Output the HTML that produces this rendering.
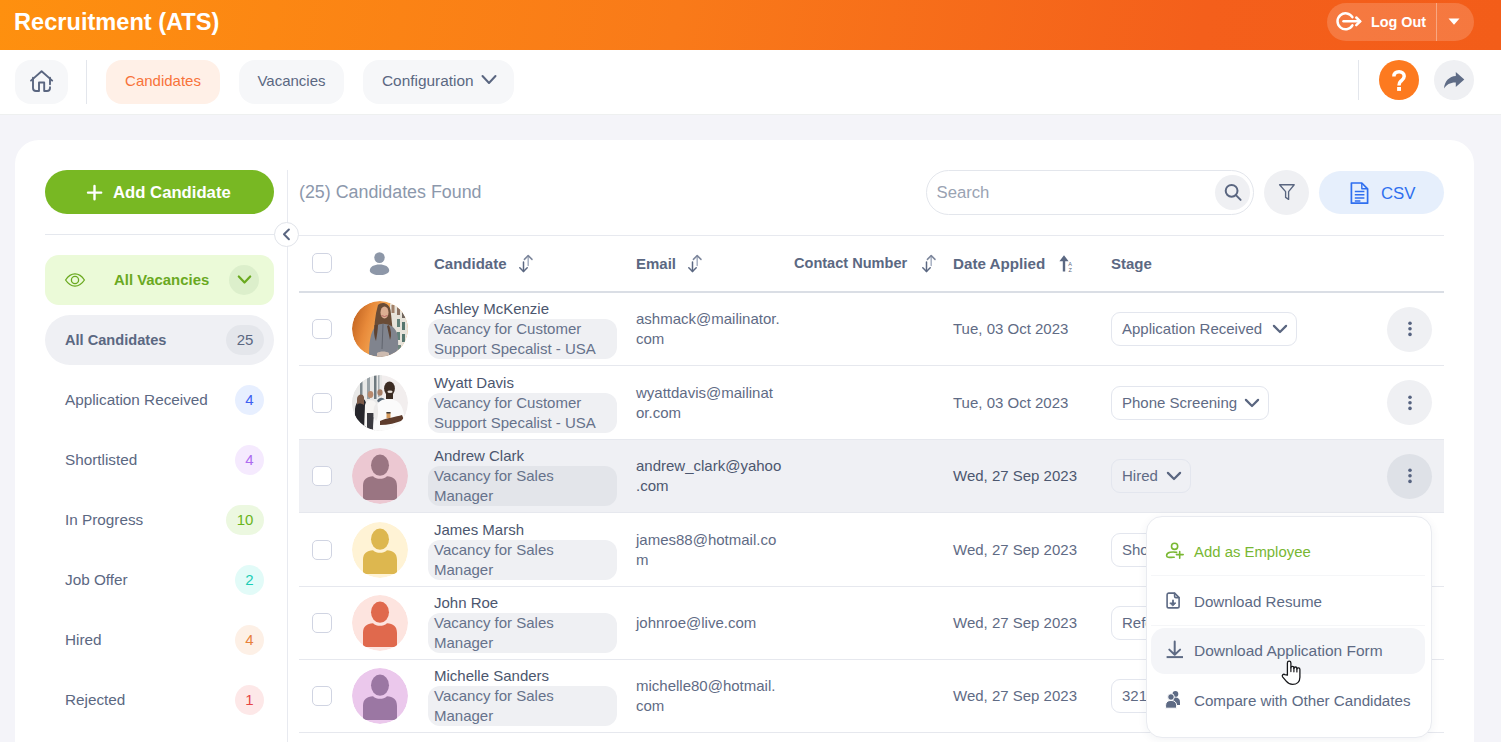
<!DOCTYPE html>
<html><head><meta charset="utf-8">
<style>
*{box-sizing:border-box;margin:0;padding:0}
html,body{width:1501px;height:742px;overflow:hidden}
body{position:relative;background:#f4f4f9;font-family:"Liberation Sans",sans-serif;color:#5b6882}
.a{position:absolute}
.hdr{left:0;top:0;width:1501px;height:50px;background:linear-gradient(100deg,#fe900f 0%,#f97a19 45%,#f45f1b 80%,#f35d19 100%)}
.nav{left:0;top:50px;width:1501px;height:64px;background:#fff;box-shadow:0 1px 0 #eef0f0}
.pill{position:absolute;top:60px;height:44px;border-radius:16px;background:#f6f7f9;font-size:15px;line-height:42px;color:#5b6882}
.card{left:15px;top:140px;width:1459px;height:700px;background:#fff;border-radius:24px}
.txt{position:absolute;white-space:nowrap}
.badge{position:absolute;right:1237px;height:30px;min-width:29px;border-radius:15px;font-size:15px;line-height:30px;text-align:center;padding:0 6px}
.side{position:absolute;left:65px;font-size:15.3px;line-height:20px;color:#5b6882;white-space:nowrap}
.hcell{position:absolute;top:236px;height:55px;line-height:55px;font-size:15px;font-weight:700;color:#5b6882;white-space:nowrap}
.sep{position:absolute;left:299px;width:1145px;height:1px;background:#e6e8ee}
.row{position:absolute;left:299px;width:1145px}
.cell{position:absolute;top:0;height:100%;display:flex;align-items:center}
.cb{width:20px;height:20px;border:1px solid #d0d4e2;border-radius:5px;background:#fff}
.av{width:56px;height:56px;border-radius:50%;overflow:hidden}
.nm{font-size:15px;line-height:20px;color:#4b566e;white-space:nowrap}
.vac{position:relative;margin-left:-6px;padding:0 6px;width:189px;border-radius:12px;background:#eff0f3;font-size:15px;line-height:20px;color:#66728b;white-space:nowrap}
.em{font-size:15px;line-height:20px;color:#5f6b85;white-space:nowrap}
.dt{font-size:15px;line-height:20px;color:#5f6b85;white-space:nowrap}
.stg{position:relative;height:34px;border:1px solid #e3e6ee;border-radius:9px;background:transparent;font-size:15px;line-height:32px;color:#5f6b85;padding:0 0 0 10px;white-space:nowrap;display:flex;align-items:center}
.kb{width:45px;height:45px;border-radius:50%;background:#eff0f3;display:flex;align-items:center;justify-content:center}
</style></head><body>

<!-- header -->
<div class="a hdr"></div>
<div class="txt" style="left:14px;top:7px;font-size:23.6px;line-height:30px;font-weight:700;color:#fff">Recruitment (ATS)</div>
<div class="a" style="left:1327px;top:3px;width:147px;height:38px;border-radius:19px;background:rgba(255,255,255,0.17)"></div>
<div class="a" style="left:1436px;top:3px;width:1px;height:38px;background:rgba(255,255,255,0.35)"></div>
<svg class="a" style="left:1330px;top:8px" width="36" height="28" viewBox="0 0 36 28" fill="none" stroke="#fff" stroke-width="2.5" stroke-linecap="round" stroke-linejoin="round">
<path d="M22.4 9.2 A8 8 0 1 0 22.4 17.4"/><path d="M13.5 13.3 H30"/><path d="M26.3 9.5 L30.2 13.3 L26.3 17.1"/></svg>
<div class="txt" style="left:1371px;top:12px;font-size:14.4px;line-height:20px;font-weight:700;color:#fff">Log Out</div>
<svg class="a" style="left:1447px;top:17px" width="14" height="9" viewBox="0 0 14 9"><path fill="#fff" d="M1.5 1.5 H12.5 L7 7.8 Z"/></svg>

<!-- nav -->
<div class="a nav"></div>
<div class="pill" style="left:15px;width:53px"></div>
<svg class="a" style="left:25px;top:65px" width="35" height="32" viewBox="0 0 35 32" fill="none" stroke="#5a6680" stroke-width="1.9" stroke-linecap="round" stroke-linejoin="round">
<path d="M6 15.6 L16.6 6.3 L27.2 15.6"/>
<path d="M8 12.8 V23 Q8 26 11 26 H14 V17.5 H19.2 V26 H22 Q25 26 25 23 V22.2"/>
<path d="M25 19.3 V12.8"/>
</svg>
<div class="a" style="left:86px;top:60px;width:1px;height:44px;background:#e3e6ec"></div>
<div class="pill" style="left:106px;width:114px;background:#fff0e7;color:#f8733a;text-align:center">Candidates</div>
<div class="pill" style="left:239px;width:105px;text-align:center">Vacancies</div>
<div class="pill" style="left:363px;width:151px;padding-left:19px;font-size:15.4px">Configuration</div>
<svg class="a" style="left:481px;top:74px" width="16" height="12" viewBox="0 0 16 12" fill="none" stroke="#5a6680" stroke-width="2" stroke-linecap="round" stroke-linejoin="round"><path d="M1.5 2 L8 9 L14.5 2"/></svg>
<div class="a" style="left:1358px;top:60px;width:1px;height:40px;background:#e3e6ec"></div>
<div class="a" style="left:1379px;top:60px;width:40px;height:40px;border-radius:50%;background:#fd7a1f"></div>
<svg class="a" style="left:1384px;top:65px" width="30" height="30" viewBox="0 0 30 30"><path d="M9.9 11.6 C9.9 8.2 12.3 6.8 15.1 6.8 C18.1 6.8 20.2 8.7 20.2 11.2 C20.2 13.7 18.5 14.8 16.8 16.2 C15.6 17.2 15 18.2 15 20.6" fill="none" stroke="#fff" stroke-width="3.5"/><rect x="13.1" y="22" width="3.9" height="3.9" fill="#fff"/></svg>
<div class="a" style="left:1434px;top:60px;width:40px;height:40px;border-radius:50%;background:#eff0f3"></div>
<svg class="a" style="left:1443px;top:70px" width="22" height="20" viewBox="0 0 22 20"><path fill="#5f6c86" d="M21.3 9.4 L12.8 1.9 V5.9 C6.4 6.3 1.6 10.8 1 18.5 C3.6 14.4 7.4 12.2 12.8 12.4 V16.9 Z"/></svg>

<!-- card -->
<div class="a card"></div>
<div class="a" style="left:45px;top:170px;width:229px;height:44px;border-radius:22px;background:#78b823"></div>
<svg class="a" style="left:86px;top:184px" width="17" height="17" viewBox="0 0 17 17" stroke="#fff" stroke-width="2.4" stroke-linecap="round"><path d="M8.5 2 V15.2 M2 8.6 H15.2"/></svg>
<div class="txt" style="left:113px;top:181.5px;font-size:16.7px;line-height:22px;font-weight:700;color:#fff">Add Candidate</div>
<div class="a" style="left:45px;top:234px;width:230px;height:1px;background:#e5e8ee"></div>
<div class="a" style="left:287px;top:170px;width:1px;height:580px;background:#e8eaf0"></div>
<div class="a" style="left:274px;top:222px;width:25px;height:25px;border-radius:50%;border:1px solid #e1e4ea;background:#fff"></div>
<svg class="a" style="left:280px;top:228px" width="13" height="13" viewBox="0 0 13 13" fill="none" stroke="#5a6680" stroke-width="2" stroke-linecap="round" stroke-linejoin="round"><path d="M8.9 1.5 L4 6.3 L8.9 11.2"/></svg>

<div class="a" style="left:45px;top:255px;width:229px;height:50px;border-radius:14px;background:#ebfad8"></div>
<svg class="a" style="left:64px;top:271px" width="22" height="18" viewBox="0 0 22 18" fill="none" stroke="#6aa91f" stroke-width="1.3"><path d="M1.6 9 C4.6 4.4 7.8 2.9 11 2.9 C14.2 2.9 17.4 4.4 20.4 9 C17.4 13.6 14.2 15.1 11 15.1 C7.8 15.1 4.6 13.6 1.6 9 Z"/><circle cx="11" cy="9" r="3.6"/></svg>
<div class="txt" style="left:114px;top:270px;font-size:14.9px;line-height:20px;font-weight:700;color:#6aa91f">All Vacancies</div>
<div class="a" style="left:229px;top:265px;width:30px;height:30px;border-radius:50%;background:#dcefcb"></div>
<svg class="a" style="left:237px;top:274px" width="15" height="12" viewBox="0 0 15 12" fill="none" stroke="#6aa91f" stroke-width="2.2" stroke-linecap="round" stroke-linejoin="round"><path d="M1.8 2.5 L7.5 8.5 L13.2 2.5"/></svg>

<div class="a" style="left:45px;top:315px;width:229px;height:50px;border-radius:25px;background:#eff0f4"></div>
<div class="txt" style="left:65px;top:330px;font-size:14.6px;line-height:20px;font-weight:700;color:#5b6882">All Candidates</div>
<div class="a" style="left:226px;top:325px;width:38px;height:30px;border-radius:15px;background:#e4e6eb;font-size:15px;line-height:30px;text-align:center;color:#5b6882">25</div>

<div class="side" style="top:390px">Application Received</div>
<div class="a" style="left:235px;top:385px;width:29px;height:30px;border-radius:50%;background:#e7efff;font-size:15px;line-height:30px;text-align:center;color:#3d5ff2">4</div>
<div class="side" style="top:450px">Shortlisted</div>
<div class="a" style="left:235px;top:445px;width:29px;height:30px;border-radius:50%;background:#f5eafe;font-size:15px;line-height:30px;text-align:center;color:#ae6cf0">4</div>
<div class="side" style="top:510px">In Progress</div>
<div class="a" style="left:226px;top:505px;width:38px;height:30px;border-radius:15px;background:#ecf8e0;font-size:15px;line-height:30px;text-align:center;color:#69b51c">10</div>
<div class="side" style="top:570px">Job Offer</div>
<div class="a" style="left:235px;top:565px;width:29px;height:30px;border-radius:50%;background:#e2fbf8;font-size:15px;line-height:30px;text-align:center;color:#1ccdb5">2</div>
<div class="side" style="top:630px">Hired</div>
<div class="a" style="left:235px;top:625px;width:29px;height:30px;border-radius:50%;background:#fdf0e6;font-size:15px;line-height:30px;text-align:center;color:#e8803b">4</div>
<div class="side" style="top:690px">Rejected</div>
<div class="a" style="left:235px;top:685px;width:29px;height:30px;border-radius:50%;background:#fde8e8;font-size:15px;line-height:30px;text-align:center;color:#e64444">1</div>

<!-- toolbar -->
<div class="txt" style="left:299px;top:181px;font-size:17.85px;line-height:22px;color:#8c98ac">(25) Candidates Found</div>
<div class="a" style="left:926px;top:170px;width:328px;height:45px;border-radius:23px;border:1px solid #e3e6ec;background:#fff"></div>
<div class="txt" style="left:936.5px;top:182px;font-size:16.7px;line-height:22px;color:#9aa3b3">Search</div>
<div class="a" style="left:1215px;top:175px;width:35px;height:35px;border-radius:50%;background:#eff0f3"></div>
<svg class="a" style="left:1222px;top:182px" width="22" height="22" viewBox="0 0 22 22" fill="none" stroke="#5a6680" stroke-width="2" stroke-linecap="round"><circle cx="9.6" cy="8.8" r="5.9"/><path d="M13.9 13.1 L18.6 17.9"/></svg>
<div class="a" style="left:1264px;top:170px;width:45px;height:45px;border-radius:50%;background:#eff0f3"></div>
<svg class="a" style="left:1277px;top:182px" width="20" height="20" viewBox="0 0 20 20" fill="none" stroke="#5a6680" stroke-width="1.35" stroke-linejoin="round"><path d="M2.6 2.7 H17.2 L11.6 9.6 V17.4 L8.6 15.4 V9.6 Z"/></svg>
<div class="a" style="left:1319px;top:171px;width:125px;height:43px;border-radius:22px;background:#e6effc"></div>
<svg class="a" style="left:1348px;top:180px" width="22" height="26" viewBox="0 0 22 26" fill="none" stroke="#2f6fef" stroke-width="1.7" stroke-linejoin="round"><path d="M3.4 3 H13.8 L19.6 8.8 V23.2 H3.4 Z"/><path d="M13.8 3 V8.8 H19.6" stroke-width="1.4"/><path d="M6.8 11.4 H16.4 M6.8 14.7 H16.4 M6.8 18 H16.4 M6.8 20.9 H12.4" stroke-width="1.5"/></svg>
<div class="txt" style="left:1381px;top:183px;font-size:16.8px;line-height:22px;color:#2f6fef">CSV</div>

<!-- table header -->
<div class="sep" style="top:235px;background:#e7e9ef"></div>
<div class="sep" style="top:291px;height:2px;background:#dadee5"></div>
<div class="a cb" style="left:312px;top:253px"></div>
<svg class="a" style="left:369px;top:252px" width="21" height="23" viewBox="0 0 21 23"><ellipse cx="10.5" cy="5.6" rx="5.2" ry="5.4" fill="#8d97a8"/><path fill="#8d97a8" d="M0.8 18.6 C0.8 14.8 5 12.6 10.5 12.6 C16 12.6 20.2 14.8 20.2 18.6 C20.2 21.4 16 23.2 10.5 23.2 C5 23.2 0.8 21.4 0.8 18.6 Z"/></svg>
<div class="hcell" style="left:434px">Candidate</div>
<div class="hcell" style="left:636px">Email</div>
<div class="hcell" style="left:794px;font-size:14.55px">Contact Number</div>
<div class="hcell" style="left:953px;font-size:15.2px">Date Applied</div>
<div class="hcell" style="left:1111px">Stage</div>
<svg class="a" style="left:519px;top:254px" width="15" height="19" viewBox="0 0 15 19" fill="none" stroke-linecap="round" stroke-linejoin="round"><path d="M9.2 1.8 V11.6" stroke="#a7b0c2" stroke-width="1.5"/><path d="M5.4 5.4 L9.2 1.6 L13 5.4" stroke="#7d879c" stroke-width="1.5"/><path d="M4.5 8 V17.4" stroke="#5b6882" stroke-width="1.5"/><path d="M0.8 13.8 L4.5 17.5 L8.2 13.8" stroke="#5b6882" stroke-width="1.5"/></svg>
<svg class="a" style="left:688px;top:254px" width="15" height="19" viewBox="0 0 15 19" fill="none" stroke-linecap="round" stroke-linejoin="round"><path d="M9.2 1.8 V11.6" stroke="#a7b0c2" stroke-width="1.5"/><path d="M5.4 5.4 L9.2 1.6 L13 5.4" stroke="#7d879c" stroke-width="1.5"/><path d="M4.5 8 V17.4" stroke="#5b6882" stroke-width="1.5"/><path d="M0.8 13.8 L4.5 17.5 L8.2 13.8" stroke="#5b6882" stroke-width="1.5"/></svg>
<svg class="a" style="left:922px;top:254px" width="15" height="19" viewBox="0 0 15 19" fill="none" stroke-linecap="round" stroke-linejoin="round"><path d="M9.2 1.8 V11.6" stroke="#a7b0c2" stroke-width="1.5"/><path d="M5.4 5.4 L9.2 1.6 L13 5.4" stroke="#7d879c" stroke-width="1.5"/><path d="M4.5 8 V17.4" stroke="#5b6882" stroke-width="1.5"/><path d="M0.8 13.8 L4.5 17.5 L8.2 13.8" stroke="#5b6882" stroke-width="1.5"/></svg>
<svg class="a" style="left:1058px;top:254px" width="16" height="19" viewBox="0 0 16 19"><path fill="#5b6882" d="M6 1.2 L1.4 7.2 H4.8 V17.6 H7.2 V7.2 H10.6 Z"/><text x="10.2" y="12.2" font-size="5.5" font-family="Liberation Sans" fill="#5b6882">A</text><text x="10.4" y="17.8" font-size="5.5" font-family="Liberation Sans" fill="#5b6882">Z</text></svg>

<!-- rows -->
<div class="sep" style="top:365px"></div>
<div class="row" style="top:293px;height:72px">
<div class="cell" style="left:13px"><div class="cb"></div></div>
<div class="cell" style="left:53px"><div class="av"><svg width="56" height="56" viewBox="0 0 56 56"><defs><clipPath id="ca"><circle cx="28" cy="28" r="28"/></clipPath><linearGradient id="ga" x1="0" x2="1" y1="0" y2="0.3"><stop offset="0" stop-color="#b85a1a"/><stop offset="0.35" stop-color="#e88a3a"/><stop offset="0.6" stop-color="#f3a552"/><stop offset="1" stop-color="#eaa060"/></linearGradient></defs><g clip-path="url(#ca)"><rect width="56" height="56" fill="url(#ga)"/><rect x="38" y="0" width="18" height="56" fill="#e7e3da"/><rect x="39.5" y="4" width="3" height="8" fill="#a0806a"/><rect x="45" y="6" width="3" height="8" fill="#8c7262"/><rect x="50" y="9" width="3" height="8" fill="#6f655e"/><rect x="45" y="18" width="3" height="8" fill="#62827a"/><rect x="50" y="21" width="3" height="8" fill="#56766e"/><rect x="45" y="31" width="3" height="8" fill="#62827a"/><rect x="50" y="33" width="3" height="8" fill="#56766e"/><rect x="46" y="44" width="3" height="7" fill="#6d877e"/><path d="M26 4 C29 0.5 37 1 38.5 9 C39.5 16 40 24 41 32 L35 36 L27 36 L22 36 C22 26 23 14 26 4 Z" fill="#6a4c36"/><ellipse cx="32.5" cy="11.5" rx="4" ry="6" fill="#dcae92"/><path d="M29.5 14.5 Q32.5 16.5 35.5 14.5" stroke="#b06060" stroke-width="0.9" fill="none"/><path d="M17 56 C17 44 18 30 24 25 C27 23 30 22.5 33 23 C38 23.5 43 26 45 32 C47 40 46 50 45 56 Z" fill="#80848e"/><path d="M22.5 24 C21.5 30 22 36 24 40 C25 34 26 28 26 24 Z" fill="#5e4332"/><path d="M37 24 C39 29 40 34 38 39 C37 34 36 29 35 25 Z" fill="#5e4332"/><path d="M31 23 L30 48" stroke="#60646e" stroke-width="1"/><path d="M25 52 C28 50 34 50 37 52 L37 56 L25 56 Z" fill="#cdbbb0"/></g></svg></div></div>
<div class="cell" style="left:135px"><div><div class="nm">Ashley McKenzie</div><div class="vac" style="background:#eff0f3">Vacancy for Customer<br>Support Specalist - USA</div></div></div>
<div class="cell" style="left:337px"><div class="em">ashmack@mailinator.<br>com</div></div>
<div class="cell" style="left:654px"><div class="dt">Tue, 03 Oct 2023</div></div>
<div class="cell" style="left:812px"><div class="stg" style="width:186px">Application Received<svg style="position:absolute;right:8px" width="16" height="12" viewBox="0 0 16 12" fill="none" stroke="#5a6680" stroke-width="2.2" stroke-linecap="round" stroke-linejoin="round"><path d="M1.9 2.9 L8 9 L14.1 2.9"/></svg></div></div>
<div class="cell" style="left:1088px"><div class="kb" style="background:#eff0f3"><svg width="6" height="20" viewBox="0 0 6 20"><circle cx="3" cy="4.2" r="1.8" fill="#566380"/><circle cx="3" cy="9.8" r="1.8" fill="#566380"/><circle cx="3" cy="15.4" r="1.8" fill="#566380"/></svg></div></div>
</div>
<div class="sep" style="top:439px"></div>
<div class="row" style="top:366px;height:73px">
<div class="cell" style="left:13px"><div class="cb"></div></div>
<div class="cell" style="left:53px"><div class="av"><svg width="56" height="56" viewBox="0 0 56 56"><defs><clipPath id="cw"><circle cx="28" cy="28" r="28"/></clipPath></defs><g clip-path="url(#cw)"><rect width="56" height="56" fill="#f2eeee"/><rect x="0" y="0" width="30" height="56" fill="#e9e9e8"/><rect x="8" y="6" width="2.5" height="26" fill="#7d888e"/><rect x="15" y="2" width="3" height="22" fill="#9aa3a8"/><rect x="22" y="0" width="2.5" height="24" fill="#6f7a80"/><rect x="26" y="0" width="1.5" height="22" fill="#a6aeb2"/><path d="M3 56 L3 34 C4 27 7 24 10 23 C13 24 15 28 15 34 L17 56 Z" fill="#26262b"/><path d="M5 24 C5 19 11 18 12 22 L12 30 C9 28 6 28 5 30 Z" fill="#7a5a48"/><path d="M12 56 L13 30 C14 24 23 24 24 29 L24 56 Z" fill="#f6f5f3"/><ellipse cx="18.5" cy="19.5" rx="2.8" ry="3.4" fill="#b98a6e"/><rect x="15" y="38" width="8" height="18" fill="#3a3a40"/><ellipse cx="28" cy="17.5" rx="2.6" ry="3.2" fill="#a88068"/><path d="M25 26 C27 22 31 22 33 25 L30 30 Z" fill="#5a6a78"/><path d="M21 56 C21 40 23 28 30 25 C33 24 38 24 42 25 C50 27 53 36 53 56 Z" fill="#fbfbfb"/><path d="M21.5 42 C21 34 22 30 25 28 C27 36 26 44 24 46 Z" fill="#ecebea"/><ellipse cx="37.5" cy="13.5" rx="5.4" ry="7" fill="#3b2b22"/><rect x="34" y="18" width="7" height="6" fill="#3b2b22"/><ellipse cx="38" cy="16.8" rx="2.6" ry="1.2" fill="#e8e0da"/><path d="M28 46 C34 43 44 42 50 40 L52 45 C44 48 36 50 28 50 Z" fill="#5e3c2c"/><rect x="34.5" y="37" width="4" height="6" fill="#d49a5c"/><rect x="34.5" y="37" width="4" height="1.5" fill="#3a3a3a"/></g></svg></div></div>
<div class="cell" style="left:135px"><div><div class="nm">Wyatt Davis</div><div class="vac" style="background:#eff0f3">Vacancy for Customer<br>Support Specalist - USA</div></div></div>
<div class="cell" style="left:337px"><div class="em">wyattdavis@mailinat<br>or.com</div></div>
<div class="cell" style="left:654px"><div class="dt">Tue, 03 Oct 2023</div></div>
<div class="cell" style="left:812px"><div class="stg" style="width:158px">Phone Screening<svg style="position:absolute;right:8px" width="16" height="12" viewBox="0 0 16 12" fill="none" stroke="#5a6680" stroke-width="2.2" stroke-linecap="round" stroke-linejoin="round"><path d="M1.9 2.9 L8 9 L14.1 2.9"/></svg></div></div>
<div class="cell" style="left:1088px"><div class="kb" style="background:#eff0f3"><svg width="6" height="20" viewBox="0 0 6 20"><circle cx="3" cy="4.2" r="1.8" fill="#566380"/><circle cx="3" cy="9.8" r="1.8" fill="#566380"/><circle cx="3" cy="15.4" r="1.8" fill="#566380"/></svg></div></div>
</div>
<div class="a" style="left:299px;top:440px;width:1145px;height:72px;background:#eff0f4"></div>
<div class="sep" style="top:512px"></div>
<div class="row" style="top:440px;height:72px">
<div class="cell" style="left:13px"><div class="cb"></div></div>
<div class="cell" style="left:53px"><div class="av"><svg width="56" height="56" viewBox="0 0 56 56"><circle cx="28" cy="28" r="28" fill="#ecc8d2"/><ellipse cx="28" cy="17.2" rx="9" ry="10.6" fill="#9a7582"/><path fill="#9a7582" d="M11 52 V38 C11 31 15 28.6 21 28.2 C23 30 25.4 30.8 28 30.8 C30.6 30.8 33 30 35 28.2 C41 28.6 45 31 45 38 V52 Z"/></svg></div></div>
<div class="cell" style="left:135px"><div><div class="nm">Andrew Clark</div><div class="vac" style="background:#e3e5ea">Vacancy for Sales<br>Manager</div></div></div>
<div class="cell" style="left:337px"><div class="em" style="color:#4c576f">andrew_clark@yahoo<br>.com</div></div>
<div class="cell" style="left:654px"><div class="dt" style="color:#4c576f">Wed, 27 Sep 2023</div></div>
<div class="cell" style="left:812px"><div class="stg" style="width:80px">Hired<svg style="position:absolute;right:8px" width="16" height="12" viewBox="0 0 16 12" fill="none" stroke="#5a6680" stroke-width="2.2" stroke-linecap="round" stroke-linejoin="round"><path d="M1.9 2.9 L8 9 L14.1 2.9"/></svg></div></div>
<div class="cell" style="left:1088px"><div class="kb" style="background:#dee1e7"><svg width="6" height="20" viewBox="0 0 6 20"><circle cx="3" cy="4.2" r="1.8" fill="#566380"/><circle cx="3" cy="9.8" r="1.8" fill="#566380"/><circle cx="3" cy="15.4" r="1.8" fill="#566380"/></svg></div></div>
</div>
<div class="sep" style="top:586px"></div>
<div class="row" style="top:513px;height:73px">
<div class="cell" style="left:13px"><div class="cb"></div></div>
<div class="cell" style="left:53px"><div class="av"><svg width="56" height="56" viewBox="0 0 56 56"><circle cx="28" cy="28" r="28" fill="#fff3d5"/><ellipse cx="28" cy="17.2" rx="9" ry="10.6" fill="#ddb74f"/><path fill="#ddb74f" d="M11 52 V38 C11 31 15 28.6 21 28.2 C23 30 25.4 30.8 28 30.8 C30.6 30.8 33 30 35 28.2 C41 28.6 45 31 45 38 V52 Z"/></svg></div></div>
<div class="cell" style="left:135px"><div><div class="nm">James Marsh</div><div class="vac" style="background:#eff0f3">Vacancy for Sales<br>Manager</div></div></div>
<div class="cell" style="left:337px"><div class="em">james88@hotmail.co<br>m</div></div>
<div class="cell" style="left:654px"><div class="dt">Wed, 27 Sep 2023</div></div>
<div class="cell" style="left:812px"><div class="stg" style="width:130px">Shortlisted<svg style="position:absolute;right:8px" width="16" height="12" viewBox="0 0 16 12" fill="none" stroke="#5a6680" stroke-width="2.2" stroke-linecap="round" stroke-linejoin="round"><path d="M1.9 2.9 L8 9 L14.1 2.9"/></svg></div></div>
<div class="cell" style="left:1088px"><div class="kb" style="background:#eff0f3"><svg width="6" height="20" viewBox="0 0 6 20"><circle cx="3" cy="4.2" r="1.8" fill="#566380"/><circle cx="3" cy="9.8" r="1.8" fill="#566380"/><circle cx="3" cy="15.4" r="1.8" fill="#566380"/></svg></div></div>
</div>
<div class="sep" style="top:659px"></div>
<div class="row" style="top:587px;height:72px">
<div class="cell" style="left:13px"><div class="cb"></div></div>
<div class="cell" style="left:53px"><div class="av"><svg width="56" height="56" viewBox="0 0 56 56"><circle cx="28" cy="28" r="28" fill="#fde4df"/><ellipse cx="28" cy="17.2" rx="9" ry="10.6" fill="#e0694d"/><path fill="#e0694d" d="M11 52 V38 C11 31 15 28.6 21 28.2 C23 30 25.4 30.8 28 30.8 C30.6 30.8 33 30 35 28.2 C41 28.6 45 31 45 38 V52 Z"/></svg></div></div>
<div class="cell" style="left:135px"><div><div class="nm">John Roe</div><div class="vac" style="background:#eff0f3">Vacancy for Sales<br>Manager</div></div></div>
<div class="cell" style="left:337px"><div class="em">johnroe@live.com</div></div>
<div class="cell" style="left:654px"><div class="dt">Wed, 27 Sep 2023</div></div>
<div class="cell" style="left:812px"><div class="stg" style="width:130px">Referral<svg style="position:absolute;right:8px" width="16" height="12" viewBox="0 0 16 12" fill="none" stroke="#5a6680" stroke-width="2.2" stroke-linecap="round" stroke-linejoin="round"><path d="M1.9 2.9 L8 9 L14.1 2.9"/></svg></div></div>
<div class="cell" style="left:1088px"><div class="kb" style="background:#eff0f3"><svg width="6" height="20" viewBox="0 0 6 20"><circle cx="3" cy="4.2" r="1.8" fill="#566380"/><circle cx="3" cy="9.8" r="1.8" fill="#566380"/><circle cx="3" cy="15.4" r="1.8" fill="#566380"/></svg></div></div>
</div>
<div class="sep" style="top:732px"></div>
<div class="row" style="top:660px;height:72px">
<div class="cell" style="left:13px"><div class="cb"></div></div>
<div class="cell" style="left:53px"><div class="av"><svg width="56" height="56" viewBox="0 0 56 56"><circle cx="28" cy="28" r="28" fill="#ebc8ec"/><ellipse cx="28" cy="17.2" rx="9" ry="10.6" fill="#9b77a3"/><path fill="#9b77a3" d="M11 52 V38 C11 31 15 28.6 21 28.2 C23 30 25.4 30.8 28 30.8 C30.6 30.8 33 30 35 28.2 C41 28.6 45 31 45 38 V52 Z"/></svg></div></div>
<div class="cell" style="left:135px"><div><div class="nm">Michelle Sanders</div><div class="vac" style="background:#eff0f3">Vacancy for Sales<br>Manager</div></div></div>
<div class="cell" style="left:337px"><div class="em">michelle80@hotmail.<br>com</div></div>
<div class="cell" style="left:654px"><div class="dt">Wed, 27 Sep 2023</div></div>
<div class="cell" style="left:812px"><div class="stg" style="width:130px">321<svg style="position:absolute;right:8px" width="16" height="12" viewBox="0 0 16 12" fill="none" stroke="#5a6680" stroke-width="2.2" stroke-linecap="round" stroke-linejoin="round"><path d="M1.9 2.9 L8 9 L14.1 2.9"/></svg></div></div>
<div class="cell" style="left:1088px"><div class="kb" style="background:#eff0f3"><svg width="6" height="20" viewBox="0 0 6 20"><circle cx="3" cy="4.2" r="1.8" fill="#566380"/><circle cx="3" cy="9.8" r="1.8" fill="#566380"/><circle cx="3" cy="15.4" r="1.8" fill="#566380"/></svg></div></div>
</div>

<!-- menu -->
<div class="a" style="left:1146px;top:516px;width:286px;height:222px;border-radius:16px;background:#fff;border:1px solid #e9ebf0;box-shadow:0 2px 10px rgba(40,50,80,0.06)"></div>
<div class="a" style="left:1151px;top:575px;width:274px;height:1px;background:#f5f6f8"></div>
<div class="a" style="left:1151px;top:625px;width:274px;height:1px;background:#f5f6f8"></div>
<div class="a" style="left:1151px;top:628px;width:274px;height:46px;border-radius:14px;background:#f4f5f8"></div>
<svg class="a" style="left:1163px;top:540px" width="24" height="22" viewBox="0 0 24 22" fill="none" stroke="#7ab833" stroke-width="1.6" stroke-linecap="round" stroke-linejoin="round"><circle cx="11.6" cy="6.3" r="3.1"/><path d="M13.6 12.4 C9.5 11.4 3.6 12.2 3.6 15.4 C3.6 17.6 6 17.4 11.2 17.3"/><path d="M16.7 11.6 V18.2 M13.4 14.6 H20.2"/></svg>
<div class="txt" style="left:1194px;top:542px;font-size:14.9px;line-height:20px;color:#78b733">Add as Employee</div>
<svg class="a" style="left:1163px;top:591px" width="20" height="20" viewBox="0 0 20 20" fill="none" stroke="#5d6a84" stroke-width="1.6" stroke-linejoin="round" stroke-linecap="round"><path d="M5.6 2.1 H11.6 L16.1 6.6 V15.2 Q16.1 16.9 14.4 16.9 H5.8 Q4.1 16.9 4.1 15.2 V3.8 Q4.1 2.1 5.6 2.1 Z"/><path d="M11.6 2.4 V5.2 Q11.6 6.6 13 6.6 H15.8"/><path d="M10 9.4 V12.4" stroke-width="1.8"/><path d="M7.2 12 H12.8 L10 14.7 Z" fill="#5d6a84" stroke-width="1"/></svg>
<div class="txt" style="left:1194px;top:592px;font-size:15.15px;line-height:20px;color:#5d6a84">Download Resume</div>
<svg class="a" style="left:1163px;top:640px" width="22" height="20" viewBox="0 0 22 20" fill="none" stroke="#5d6a84" stroke-width="2" stroke-linecap="round" stroke-linejoin="round"><path d="M11.7 1.6 V14.4 M6.3 9.6 L11.7 14.8 L17.1 9.6"/><path d="M3.6 17.1 H20" stroke-width="2" stroke-linecap="butt"/></svg>
<div class="txt" style="left:1194px;top:641px;font-size:15.5px;line-height:20px;color:#5d6a84">Download Application Form</div>
<svg class="a" style="left:1163px;top:689px" width="20" height="22" viewBox="0 0 20 22"><circle cx="12.4" cy="4.9" r="2.9" fill="#5d6a84"/><path fill="#5d6a84" d="M8 16 V13 C8 10.2 9.6 8.6 12.4 8.6 C15.2 8.6 17 10.2 17 13 V16 Z"/><circle cx="8" cy="8" r="3.3" fill="#5d6a84" stroke="#fff" stroke-width="1"/><path fill="#5d6a84" stroke="#fff" stroke-width="1" d="M2.6 19.2 V16.2 C2.6 13.2 4.8 11.4 8 11.4 C11.2 11.4 13.6 13.2 13.6 16.2 V19.2 Z"/></svg>
<div class="txt" style="left:1194px;top:691px;font-size:15.16px;line-height:20px;color:#5d6a84">Compare with Other Candidates</div>
<!-- cursor -->
<svg class="a" style="left:1275px;top:652px" width="35" height="40" viewBox="0 0 35 40"><path fill="#fff" stroke="#17181c" stroke-width="1.3" stroke-linejoin="round" d="M12.4 23.2 V11 C12.4 8.6 15.9 8.6 15.9 11 V15.8 C16 13.9 18.9 13.9 18.9 15.9 V16.4 C19 14.5 21.9 14.5 21.9 16.5 V17 C22 15.4 24.9 15.4 24.9 17.4 V25.2 C24.9 29.8 21.8 32.4 17.6 32.4 C14.8 32.4 12.9 31.4 11.2 29.2 L7.6 24.8 C6.6 23.5 8.3 21.5 9.9 22.6 Z"/><path d="M15.9 15.8 V19.6 M18.9 16.2 V19.8 M21.9 16.8 V20" stroke="#17181c" stroke-width="1.2" stroke-linecap="round"/></svg>

</body></html>
